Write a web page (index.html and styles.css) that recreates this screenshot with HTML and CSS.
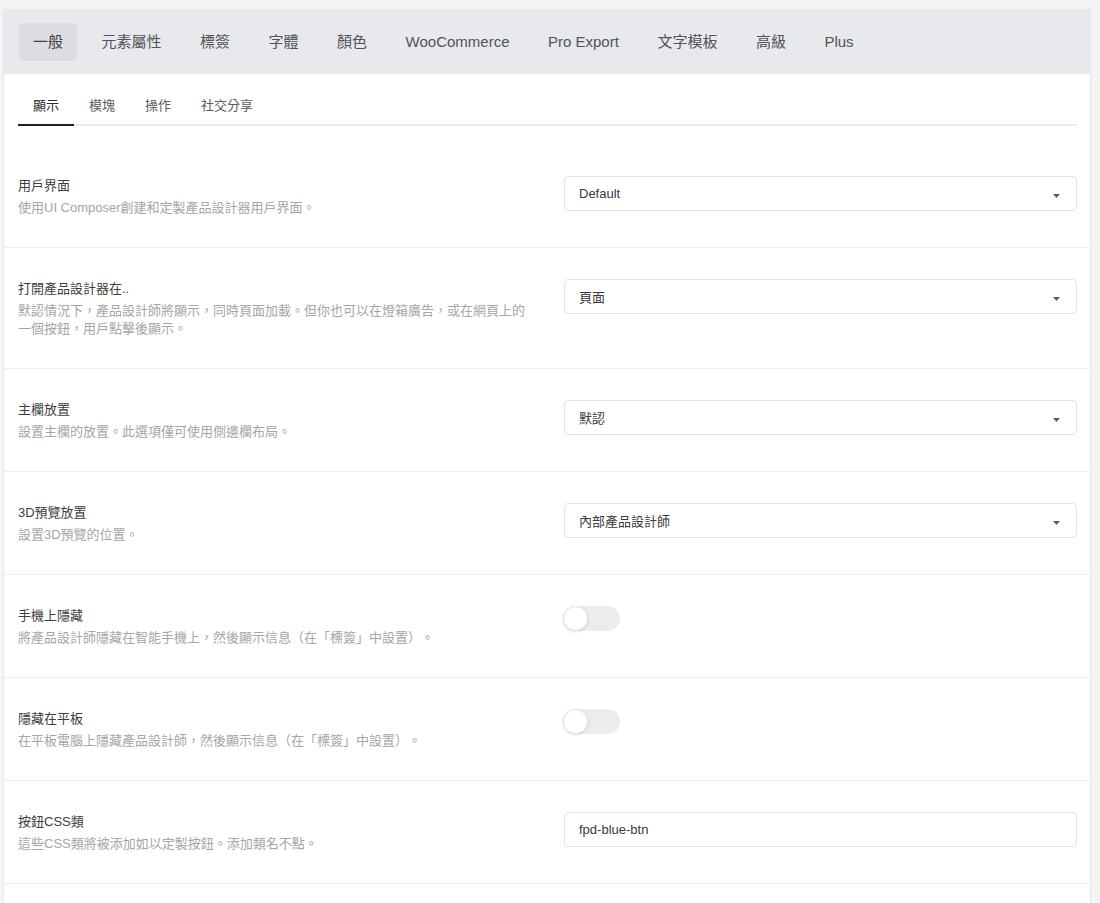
FILE: index.html
```html
<!DOCTYPE html>
<html lang="zh-Hant">
<head>
<meta charset="utf-8">
<title>設置</title>
<link rel="stylesheet" href="styles.css">
</head>
<body>
<div class="panel">
  <nav class="tabs">
    <span class="tab active">一般</span>
    <span class="tab">元素屬性</span>
    <span class="tab">標簽</span>
    <span class="tab">字體</span>
    <span class="tab">顏色</span>
    <span class="tab">WooCommerce</span>
    <span class="tab">Pro Export</span>
    <span class="tab">文字模板</span>
    <span class="tab">高級</span>
    <span class="tab">Plus</span>
  </nav>
  <div class="content">
    <div class="subtabs">
      <span class="subtab active">顯示</span>
      <span class="subtab">模塊</span>
      <span class="subtab">操作</span>
      <span class="subtab">社交分享</span>
    </div>
    <div class="rows">
      <div class="row">
        <div class="info">
          <div class="label">用戶界面</div>
          <div class="desc">使用UI Composer創建和定製產品設計器用戶界面。</div>
        </div>
        <div class="control">
          <div class="select"><span>Default</span><svg class="caret" width="7" height="4" viewBox="0 0 7 4"><path d="M0 0h7L3.5 4z"/></svg></div>
        </div>
      </div>
      <div class="row">
        <div class="info">
          <div class="label">打開產品設計器在..</div>
          <div class="desc">默認情況下，產品設計師將顯示，同時頁面加載。但你也可以在燈箱廣告，或在網頁上的一個按鈕，用戶點擊後顯示。</div>
        </div>
        <div class="control">
          <div class="select"><span>頁面</span><svg class="caret" width="7" height="4" viewBox="0 0 7 4"><path d="M0 0h7L3.5 4z"/></svg></div>
        </div>
      </div>
      <div class="row">
        <div class="info">
          <div class="label">主欄放置</div>
          <div class="desc">設置主欄的放置。此選項僅可使用側邊欄布局。</div>
        </div>
        <div class="control">
          <div class="select"><span>默認</span><svg class="caret" width="7" height="4" viewBox="0 0 7 4"><path d="M0 0h7L3.5 4z"/></svg></div>
        </div>
      </div>
      <div class="row">
        <div class="info">
          <div class="label">3D預覽放置</div>
          <div class="desc">設置3D預覽的位置。</div>
        </div>
        <div class="control">
          <div class="select"><span>內部產品設計師</span><svg class="caret" width="7" height="4" viewBox="0 0 7 4"><path d="M0 0h7L3.5 4z"/></svg></div>
        </div>
      </div>
      <div class="row">
        <div class="info">
          <div class="label">手機上隱藏</div>
          <div class="desc">將產品設計師隱藏在智能手機上，然後顯示信息（在「標簽」中設置）。</div>
        </div>
        <div class="control">
          <span class="toggle"><span class="knob"></span></span>
        </div>
      </div>
      <div class="row">
        <div class="info">
          <div class="label">隱藏在平板</div>
          <div class="desc">在平板電腦上隱藏產品設計師，然後顯示信息（在「標簽」中設置）。</div>
        </div>
        <div class="control">
          <span class="toggle"><span class="knob"></span></span>
        </div>
      </div>
      <div class="row">
        <div class="info">
          <div class="label">按鈕CSS類</div>
          <div class="desc">這些CSS類將被添加如以定製按鈕。添加類名不點。</div>
        </div>
        <div class="control">
          <div class="input">fpd-blue-btn</div>
        </div>
      </div>
      <div class="row">
        <div class="info">
          <div class="label">&nbsp;</div>
        </div>
        <div class="control"></div>
      </div>
    </div>
  </div>
</div>
</body>
</html>
```

FILE: styles.css
```css
* { box-sizing: border-box; }

html, body {
  margin: 0;
  padding: 0;
  background: #f4f4f5;
  font-family: "Liberation Sans", "Noto Sans CJK TC", sans-serif;
  text-spacing-trim: space-all;
  overflow: hidden;
}

body {
  padding: 9px 9px 0 3px;
}

.panel {
  background: #ffffff;
  border-left: 1px solid #e6e6e8;
  border-right: 1px solid #e6e6e8;
  height: 894px;
  overflow: hidden;
}

.tabs {
  display: flex;
  align-items: center;
  gap: 10.5px;
  height: 65px;
  padding: 0 15px;
  background: #e8e9ec;
}

.tab {
  display: block;
  height: 38px;
  line-height: 38px;
  padding: 0 14px;
  font-size: 15px;
  color: #505357;
  border-radius: 3px;
  white-space: nowrap;
}

.tab.active {
  background: #dcdde1;
  color: #3c3e42;
}

.subtabs {
  display: flex;
  margin: 0 13px 0 14px;
  padding-top: 22px;
  box-shadow: inset 0 -2px 0 #ececee;
}

.subtab {
  display: block;
  padding: 0 15px 8px;
  line-height: 20px;
  font-size: 13px;
  color: #5a5a5d;
  border-bottom: 2px solid transparent;
}

.subtab.active {
  color: #2a2a2a;
  border-bottom-color: #1e1e1e;
}

.rows {
  margin-top: 19px;
}

.row {
  display: grid;
  grid-template-columns: 546px 1fr;
  padding: 31px 13px 30px 14px;
  border-bottom: 1px solid #efeff1;
}

.info {
  padding-right: 30px;
}

.label {
  font-size: 13px;
  line-height: 20px;
  color: #3d3d3f;
}

.desc {
  margin-top: 3px;
  font-size: 13px;
  line-height: 18px;
  color: #a5a5a8;
}

.control {
  display: flex;
  align-items: flex-start;
}

.select,
.input {
  display: flex;
  align-items: center;
  justify-content: space-between;
  width: 100%;
  height: 35px;
  padding: 0 16px 0 14px;
  border: 1px solid #e3e3e6;
  border-radius: 4px;
  background: #fff;
  font-size: 13px;
  color: #3a3a3a;
}

.caret {
  flex: none;
  margin-top: 4px;
  fill: #5e5e5e;
}

.toggle {
  position: relative;
  display: block;
  width: 57px;
  height: 25px;
  margin-left: -1px;
  border-radius: 13px;
  background: #ececef;
}

.knob {
  position: absolute;
  left: 0;
  top: 0;
  width: 25px;
  height: 25px;
  border-radius: 50%;
  background: #fff;
  border: 1px solid #e6e6e8;
  box-shadow: 0 1px 3px rgba(0, 0, 0, 0.12);
}
```
